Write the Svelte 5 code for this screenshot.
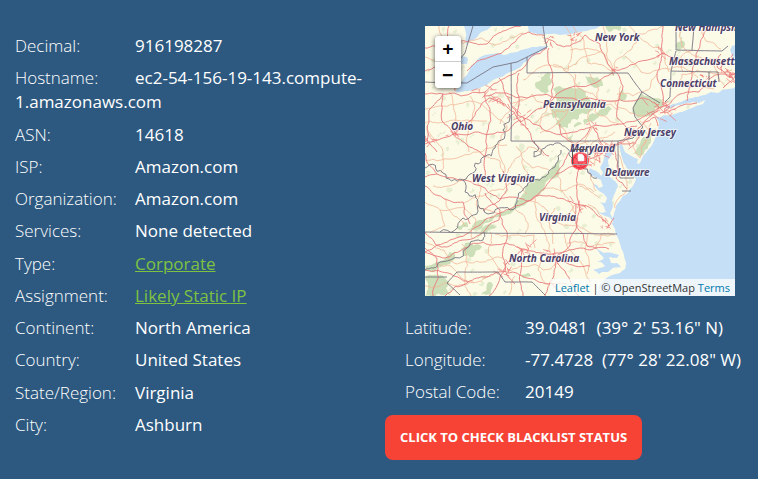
<script>
  const details = [
    { label: 'Decimal:', value: '916198287' },
    { label: 'Hostname:', value: 'ec2-54-156-19-143.compute-1.amazonaws.com' },
    { label: 'ASN:', value: '14618' },
    { label: 'ISP:', value: 'Amazon.com' },
    { label: 'Organization:', value: 'Amazon.com' },
    { label: 'Services:', value: 'None detected' },
    { label: 'Type:', value: 'Corporate', link: '#corporate' },
    { label: 'Assignment:', value: 'Likely Static IP', link: '#static' },
    { label: 'Continent:', value: 'North America' },
    { label: 'Country:', value: 'United States' },
    { label: 'State/Region:', value: 'Virginia' },
    { label: 'City:', value: 'Ashburn' }
  ];

  const position = [
    { label: 'Latitude:', value: '39.0481\u00a0 (39° 2\' 53.16" N)' },
    { label: 'Longitude:', value: '-77.4728\u00a0 (77° 28\' 22.08" W)' },
    { label: 'Postal Code:', value: '20149' }
  ];

  // Deterministic noise, so coastlines and roads wander the same way every time.
  let seed = 7;
  function rand() {
    seed = (seed * 16807) % 2147483647;
    return seed / 2147483647 - 0.5;
  }

  // Turns "x,y x,y ..." into a path whose segments are broken up by midpoint displacement.
  function rough(points, amount = 0.2, close = false) {
    let list = points.trim().split(/\s+/).map((p) => p.split(',').map(Number));
    if (close) list.push(list[0]);
    for (let pass = 0; pass < 3; pass++) {
      const next = [list[0]];
      for (let i = 1; i < list.length; i++) {
        const [ax, ay] = list[i - 1];
        const [bx, by] = list[i];
        const dx = bx - ax;
        const dy = by - ay;
        if (Math.hypot(dx, dy) > 4) {
          const k = rand() * amount;
          next.push([(ax + bx) / 2 - dy * k, (ay + by) / 2 + dx * k]);
        }
        next.push(list[i]);
      }
      list = next;
    }
    return 'M' + list.map(([x, y]) => x.toFixed(1) + ' ' + y.toFixed(1)).join('L') + (close ? 'Z' : '');
  }

  const water = [
    '30,66 36,56 42,49 46,40 53,33 60,29 66,28 72,27 79,29 85,27 92,26 100,23 107,21 115,20 123,20 121,23 113,27 106,32 100,36 94,42 85,46 77,51 68,54 63,58 55,62 48,64 40,65',
    '39,0 67,0 62,4 55,7 50,13 45,15 41,19',
    '36,31 42,31 43,34 42,38 36,38',
    '103,0 104,6 112,8 122,8 135,9 150,7 162,5 170,3 175,0 140,-9',
    '314,18 307,20 305,24 307,30 314,34',
    '460,60 311,61 303,63 297,64 293,67 286,66 280,69 272,71 263,73 256,76 248,78 243,80 239,83 246,82 253,79 261,77 268,76 274,77 281,74 278,78 271,80 264,83 257,86 247,89 240,89 236,91 231,91 234,96 233,103 231,110 228,117 223,124 218,130 215,137 212,138 213,133 208,131 203,128 200,126 198,121 196,117 194,121 196,129 198,135 202,142 207,148 211,153 209,158 205,163 203,167 198,170 195,175 191,180 189,188 187,192 185,187 188,181 187,174 190,167 193,160 190,155 185,151 182,146 184,140 183,134 187,128 188,122 184,119 181,125 179,132 177,138 175,142 178,147 176,150 171,145 165,142 163,147 170,151 176,154 178,160 174,162 172,159 168,158 174,165 179,168 182,172 180,177 175,176 179,181 181,186 177,187 171,184 178,189 184,191 188,195 187,198 190,203 191,208 194,214 196,222 199,229 201,237 200,243 195,247 187,249 180,253 174,260 172,271 460,274',
    '169,221 174,224 179,227 187,227 194,229 192,232 184,231 186,237 192,237 196,241 188,242 183,246 177,246 174,248 168,244 175,242 180,240 176,236 172,236 179,232 175,228'
  ];

  const woods = [
    '110,57 115,55 116,51 120,48 126,48 127,56 123,60 124,65 120,68 116,66 111,62',
    '128,63 142,62 155,62 161,66 164,73 173,78 180,83 168,84 162,88 154,89 152,94 143,98 143,102 136,102 131,98 135,93 128,92',
    '208,82 213,73 217,67 228,72 238,77 237,82 230,82 228,88 219,90 212,92',
    '137,134 134,140 134,146 128,153 120,159 115,168 108,172 100,179 92,182 85,188 73,191 60,197 42,203 55,194 70,190 88,182 92,174 98,168 101,160 108,156 115,153 124,145 130,139',
    '56,204 72,200 62,208 47,213 55,208',
    '0,240 12,236 21,231 30,225 30,230 16,241 0,245',
    '0,252 20,252 24,256 21,262 26,270 0,270',
    '62,258 66,256 66,269 56,269',
    '158,95 172,87 184,80 187,83 171,93 159,99',
    '252,0 260,0 258,22 252,24',
    '194,68 198,63 202,69 200,74 195,74',
    '216,114 227,106 226,114 220,124 214,130 207,128',
    '142,112 153,96 157,98 147,115',
    '180,0 196,0 194,5 184,6',
    '40,217 57,221 48,231 38,230',
    '30,199 42,196 43,201 34,204',
    '160,50 172,51 178,60 170,62 164,57',
    '96,249 104,247 106,250 98,252'
  ];

  const borders = [
    '0,56 42,57 68,41 92,36 122,21 120,14 118,0',
    '48,0 40,27 35,33',
    '102,31 102,47 203,47 210,57 217,66 208,82 210,91 218,101 208,112 193,115',
    '86,37 86,115 193,115 193,140 195,152 209,152',
    '84,88 84,96 78,104 70,122 58,131 48,147 38,154 18,147 0,142',
    '109,115 109,131 120,122 128,119 136,118 143,123 147,132 157,140 166,148 172,152',
    '38,154 40,166 53,179 38,192 15,206',
    '53,179 63,188 85,184 92,176 103,157 118,151 130,141 133,130 136,124',
    '0,206 192,208',
    '59,206 58,214 42,222 15,236 0,244',
    '0,251 22,251',
    '35,269 22,257 32,246 73,246 80,256 107,256 120,269',
    '217,66 235,77',
    '251,0 251,24 297,25 303,20',
    '269,0 267,24',
    '251,25 246,45 245,71 240,76',
    '246,45 293,46 294,56',
    '284,46 284,62',
    '197,165 206,165'
  ];

  const highways = [
    '0,22 20,20 45,16 62,18 78,5 96,0', '0,68 18,68 36,70 60,66 80,52 96,44 122,22',
    '42,45 60,33 90,16 103,6 120,10', '122,12 132,19 145,20 160,9 175,18 188,44 205,39 238,27',
    '124,22 126,42 128,60 122,80', '18,68 4,84 2,116 12,126', '18,68 17,95 28,108 43,120 60,130',
    '60,66 65,86 62,120 60,150', '28,108 50,106 80,106 96,94', '0,118 28,108 48,92 64,72',
    '64,72 80,78 96,96 107,87 150,60 188,46', '94,47 94,78 92,92 104,105 108,116 124,130',
    '74,52 86,78 94,90 108,98 121,105 150,106 168,100 194,98 215,93 234,82',
    '60,70 102,72 142,72 188,75 216,72 234,81', '188,44 198,60 192,92 202,102 212,100',
    '238,0 237,27 232,48 238,79', '238,27 246,31 270,35 298,38 308,28', '262,75 266,54 271,28 283,0',
    '296,28 292,41 302,50 308,52', '234,82 255,68 274,66 284,53 310,48',
    '166,101 155,115 142,130 132,147 119,163 101,176 75,187 49,202 25,214 0,226',
    '168,101 175,115 182,122 172,130 158,136 152,151 154,178 151,198', '182,122 198,116 210,108 218,98 234,81',
    '135,98 137,110 151,120 164,130', '158,135 140,144 131,148', '183,123 190,117 193,136 191,152 202,163',
    '185,119 199,118 210,117 218,106', '218,98 230,91 233,100', '235,87 250,83 272,77',
    '151,178 164,181 172,189 184,200', '151,178 132,172 115,169 101,175 74,173 60,162 38,154 12,148 0,151',
    '151,178 152,200 145,220 132,230 128,252 120,270', '0,206 11,219 22,221 38,214 52,210 74,194 75,184 60,167',
    '75,189 82,206 78,232 80,245 90,258', '78,245 97,223 106,225 127,228 155,222 184,223',
    '97,223 96,244 98,270', '97,223 81,217 58,216 40,222 20,232 0,226', '43,256 26,248 0,244',
    '80,245 61,251 43,256 20,270', '80,245 64,270', '82,247 102,252 127,257 142,270', '128,228 140,245 154,270',
    '151,200 162,220 172,222', '128,228 142,237 165,240', '58,185 70,178 82,164 78,145', '30,65 20,20 24,0',
    '0,160 18,172 38,176 45,198', '12,148 0,127', '0,222 12,233 8,270', '184,200 189,192',
    '0,45 18,38 30,46', '310,50 302,58 298,62'
  ];

  const roads = [
    '0,83 14,80 45,75 65,86', '0,97 21,96 62,95', '24,66 29,84 28,108', '45,70 46,98 44,126', '2,100 18,126 16,147',
    '0,134 32,132 65,122 82,119', '65,86 82,100 73,120 80,146', '86,78 107,68 122,80 117,104', '98,73 84,86 75,98',
    '108,98 124,88 154,80 163,70', '115,107 132,98 142,86 151,64 150,48', '124,80 133,95 142,112 164,116',
    '165,48 172,70 170,86 194,98', '128,38 143,46 156,63 176,78 194,83', '98,54 118,40 142,43 158,31 176,25',
    '148,0 158,12 163,37 188,46', '188,44 180,29 165,23 145,24', '188,45 206,24 214,8 238,0', '204,0 221,16 237,24 244,46',
    '200,30 216,46 234,44 258,41 273,52', '192,68 208,70 225,62 232,48', '196,60 190,77 205,87 220,90',
    '166,101 164,86 173,77 192,75', '168,101 160,116 170,128', '190,106 174,112 163,121', '119,130 103,121 91,132 82,147',
    '91,120 97,132 107,142 124,144', '58,131 74,134 81,149 91,158 102,168', '48,148 56,162 51,179 75,188',
    '38,178 58,170 78,164 104,152', '0,176 15,184 20,200 5,207', '15,184 38,181 51,194 47,212', '20,172 28,189 40,200',
    '90,183 103,197 100,208', '110,172 111,188 120,206 125,228', '119,163 137,165 154,158 169,166', '131,148 136,164 144,176 152,200',
    '101,176 119,181 132,196 151,199 170,209 188,208', '130,182 124,196 128,218', '151,178 144,188 132,196',
    '158,138 166,154 171,165', '154,160 166,166 174,172', '163,178 170,182 178,194',
    '193,140 202,156 201,165 190,182', '193,128 200,146 206,150',
    '163,207 160,222 164,234 162,248', '171,221 176,209 190,209', '142,217 157,216 163,220 190,217', '140,207 145,224 157,238 165,256',
    '116,228 113,244 123,258 142,258', '80,245 96,240 118,244 132,238', '65,206 63,228 77,244', '37,218 42,230 40,249 46,270',
    '0,216 19,224 32,238 58,236 78,232', '12,237 26,240 36,252 49,257', '0,260 20,257 45,256 66,250', '90,250 84,269',
    '110,222 109,209 97,210 70,208', '256,0 257,20 273,31 297,36', '274,1 281,15 296,23', '284,33 292,46 300,61',
    '250,62 257,48 272,44 288,48 307,44', '244,57 262,60 275,59 289,63', '258,46 256,31 270,24', '216,121 224,112 226,97',
    '217,101 223,112 215,132', '215,95 225,105 231,103', '208,115 211,127 215,132',
    '169,121 172,131 169,140', '14,0 28,18 12,36 0,31', '28,18 56,12 75,18 98,7',
    '140,0 146,20 143,45', '178,0 182,22 188,44', '88,155 103,147 97,133', '8,160 24,160 38,154'
  ];

  // Dense street knots round the larger cities.
  const cities = [
    [160, 134, 8], [172, 130, 8], [181, 121, 5], [209, 110, 8], [235, 80, 9], [230, 86, 8], [245, 83, 4],
    [301, 42, 8], [303, 51, 6], [28, 108, 5], [60, 70, 8], [96, 94, 8], [122, 14, 5],
    [154, 179, 6], [182, 199, 5], [98, 223, 7], [128, 229, 8], [79, 244, 6], [4, 115, 5],
    [78, 76, 6], [188, 44, 3], [237, 27, 4], [280, 53, 4], [262, 58, 4], [168, 101, 4], [150, 12, 4]
  ];
  const knots = cities.map(([x, y, r]) => {
    let d = '';
    for (let i = 0; i < 9; i++) {
      d += `M${(x + rand() * r * 2).toFixed(1)} ${(y + rand() * r * 2).toFixed(1)}l${(rand() * r * 2).toFixed(1)} ${(rand() * r * 2).toFixed(1)}`;
    }
    return d;
  });

  const specks = Array.from({ length: 240 }, () => {
    const x = 155 + rand() * 310;
    const y = 135 + rand() * 270;
    return rough(`${x},${y} ${x + 3},${y - 3} ${x + 5 + rand() * 4},${y - 1} ${x + 2},${y + 2}`, 1, true);
  });

  const waterPaths = water.map((p) => rough(p, 0.15, true));
  const woodPaths = woods.map((p) => rough(p, 0.5, true));
  const borderPaths = borders.map((p, i) => rough(p, [4, 5, 6, 7, 9].includes(i) ? 0.6 : 0.01));
  const highwayPaths = highways.map((p) => rough(p, 0.22));
  const roadPaths = roads.map((p) => rough(p, 0.3));

  const places = [
    { name: 'New York', x: 170, y: 15 },
    { name: 'New Hampshire', x: 250, y: 5 },
    { name: 'Massachusetts', x: 244, y: 39 },
    { name: 'Connecticut', x: 235, y: 61 },
    { name: 'Pennsylvania', x: 118, y: 82 },
    { name: 'Ohio', x: 26, y: 104 },
    { name: 'New Jersey', x: 199, y: 110 },
    { name: 'Maryland', x: 145, y: 126 },
    { name: 'Delaware', x: 180, y: 150 },
    { name: 'West Virginia', x: 47, y: 156 },
    { name: 'Virginia', x: 114, y: 195 },
    { name: 'North Carolina', x: 84, y: 236 }
  ];
</script>

<main>
  <dl class="facts">
    {#each details as item}
      <div class="row">
        <dt>{item.label}</dt>
        <dd>{#if item.link}<a href={item.link}>{item.value}</a>{:else}{item.value}{/if}</dd>
      </div>
    {/each}
  </dl>

  <section class="place">
    <div class="map">
      <svg viewBox="0 0 310 270" preserveAspectRatio="xMidYMid slice" role="img" aria-label="Map of the Mid-Atlantic states">
        <rect width="310" height="270" fill="#fcfbe7" />
        <g fill="#dfe9c9" opacity="0.7">{#each specks as d}<path {d} />{/each}</g>
        <g fill="#c8dcb4" opacity="0.9">{#each woodPaths as d}<path {d} />{/each}</g>
        <g fill="#c5dff6">{#each waterPaths as d}<path {d} />{/each}</g>
        <g fill="none" stroke="#f3b79b" stroke-width="0.8">{#each roadPaths as d}<path {d} />{/each}</g>
        <g fill="none" stroke="#e87b7c" stroke-width="0.9">{#each highwayPaths as d}<path {d} />{/each}</g>
        <g fill="none" stroke="#ec7777" stroke-width="0.7">{#each knots as d}<path {d} />{/each}</g>
        <g fill="none" stroke="#777482" stroke-width="0.9">{#each borderPaths as d}<path {d} />{/each}</g>
        <g class="names">
          {#each places as p}<text x={p.x} y={p.y}>{p.name}</text>{/each}
        </g>
        <circle cx="155" cy="135" r="9" fill="#ff2638" fill-opacity="0.72" />
        <circle cx="155" cy="135" r="7" fill="none" stroke="#ee2433" />
        <path d="M147.500 138.500V123.500H162.500" fill="none" stroke="#555" />
        <path d="M162.500 123.500V138.500H147.500" fill="none" stroke="#aaa" />
        <path d="M153 128h4l2 2v5h-6z" fill="#fff" stroke="#ddd" stroke-width="0.5" />
      </svg>
      <div class="zoom">
        <button type="button" aria-label="Zoom in">+</button>
        <button type="button" aria-label="Zoom out">−</button>
      </div>
      <div class="credit"><a href="#leaflet">Leaflet</a> | © OpenStreetMap <a href="#terms">Terms</a></div>
    </div>

    <dl class="coords">
      {#each position as item}
        <div class="row">
          <dt>{item.label}</dt>
          <dd>{item.value}</dd>
        </div>
      {/each}
    </dl>

    <button class="check" type="button">CLICK TO CHECK BLACKLIST STATUS</button>
  </section>
</main>

<style>
  :global(body) {
    margin: 0;
    background: #2d5980;
  }

  main {
    display: grid;
    grid-template-columns: minmax(0, 1fr) minmax(0, 1fr);
    column-gap: 12px;
    padding: 26px 0 19px;
    color: #fff;
    font: 17px/24px 'Open Sans', 'Noto Sans', sans-serif;
  }

  dl,
  dd {
    margin: 0;
  }

  .facts {
    display: flex;
    flex-direction: column;
    justify-content: space-between;
    padding: 8px 0 23px 15px;
  }

  dt {
    float: left;
    width: 120px;
    font-weight: 300;
  }

  .facts a {
    color: #7fc241;
    text-decoration: underline;
  }

  .place {
    display: flex;
    flex-direction: column;
    align-items: flex-start;
  }

  .map {
    position: relative;
    align-self: stretch;
    height: 270px;
    margin: 0 23px 20px 40px;
    overflow: hidden;
  }

  svg {
    display: block;
    width: 100%;
    height: 100%;
  }

  .names text {
    font: italic 700 10px 'Noto Sans', 'Open Sans', sans-serif;
    fill: #4c4068;
    stroke: rgba(255, 255, 255, 0.6);
    stroke-width: 2px;
    stroke-linejoin: round;
    paint-order: stroke;
  }

  .zoom {
    position: absolute;
    top: 10px;
    left: 10px;
    display: flex;
    flex-direction: column;
    border-radius: 4px;
    overflow: hidden;
    box-shadow: 0 1px 5px rgba(0, 0, 0, 0.65);
  }

  .zoom button {
    box-sizing: border-box;
    width: 26px;
    height: 26px;
    padding: 0;
    border: 0;
    background: #fff;
    color: #000;
    font: bold 18px/24px 'DejaVu Sans Mono', monospace;
  }

  .zoom button:first-child {
    border-bottom: 1px solid #ccc;
  }

  .credit {
    position: absolute;
    right: 0;
    bottom: 0;
    padding: 0 5px;
    background: rgba(255, 255, 255, 0.7);
    color: #333;
    font-size: 11px;
    line-height: 17px;
    white-space: nowrap;
  }

  .credit a {
    color: #0078a8;
    text-decoration: none;
  }

  .coords {
    display: flex;
    flex-direction: column;
    gap: 8px;
    padding-left: 20px;
    white-space: nowrap;
  }

  .check {
    margin-top: 11px;
    padding: 0 15px;
    border: 0;
    border-radius: 8px;
    background: #f64336;
    color: #fff;
    font: 700 13px/45px 'Open Sans', 'Noto Sans', sans-serif;
  }
</style>
